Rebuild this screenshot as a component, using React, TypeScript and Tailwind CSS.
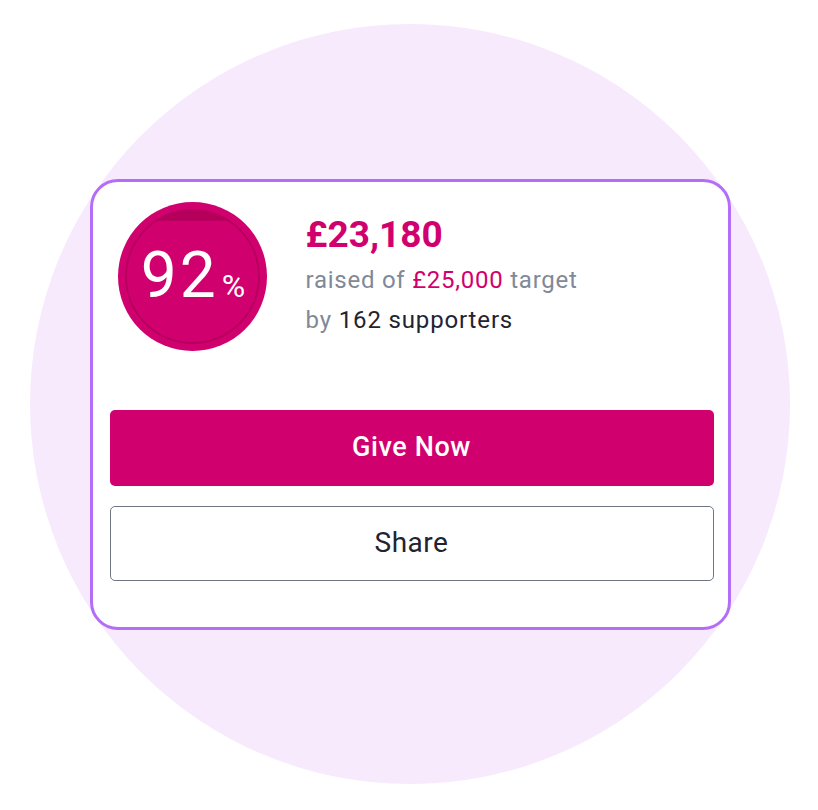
export default function App() {
  const raised = 23180;
  const target = 25000;
  const pct = Math.floor((raised / target) * 100);

  return (
    <div className="h-[810px] w-[818px] bg-white pl-[30px] pt-[24px] font-['Roboto',sans-serif]">
      <div className="flex h-[760px] w-[760px] items-center justify-center rounded-full bg-[#f7eafd]">
        <div className="flex h-[451px] w-[641px] flex-col rounded-[28px] border-[3px] border-[#b46df6] bg-white pl-[17px] pr-[14px]">
          <div className="flex items-start pl-[8px] pt-[20px]">
            <ProgressBadge pct={pct} />
            <div className="ml-[39px] pt-[11px]">
              <p className="text-[37px] font-bold leading-[44px] text-[#d1006f]">£23,180</p>
              <p className="mt-[4px] text-[24px] leading-[38px] tracking-[0.75px] text-[#7f8998]">
                raised of <span className="text-[#d1006f]">£25,000</span> target
              </p>
              <p className="mt-[2px] text-[24px] leading-[38px] tracking-[0.85px] text-[#7f8998]">
                by <span className="text-[#1f2430]">162 supporters</span>
              </p>
            </div>
          </div>
          <button className="mt-[59px] flex h-[76px] w-full items-center justify-center rounded-[5px] bg-[#d1006f] text-[27px] font-medium tracking-[0.6px] text-white">
            Give Now
          </button>
          <button className="mt-[20px] flex h-[75px] w-full items-center justify-center rounded-[5px] border-[1.5px] border-[#6f7682] bg-white text-[28px] tracking-[0.5px] text-[#1f2430]">
            Share
          </button>
        </div>
      </div>
    </div>
  );
}

function ProgressBadge({ pct }: { pct: number }) {
  // unfilled cap at the top of the inner disc, filled from the bottom
  const r = 66;
  const cx = 74;
  const cy = 74;
  const top = cy - r;
  const capY = top + (2 * r * (100 - pct)) / 100;
  const dx = Math.sqrt(r * r - (cy - capY) * (cy - capY));

  return (
    <div className="relative h-[149px] w-[149px] shrink-0">
      <svg width="149" height="149" viewBox="0 0 148 148" className="absolute inset-0">
        <circle cx={cx} cy={cy} r="74" fill="#d1006f" />
        <path
          d={`M ${cx - dx} ${capY} A ${r} ${r} 0 0 1 ${cx + dx} ${capY} Z`}
          fill="#b5005b"
        />
        <circle cx={cx} cy={cy} r={r} fill="none" stroke="#b8005f" strokeWidth="2" />
      </svg>
      <div className="absolute inset-0 flex items-baseline justify-center pt-[38px] pl-[2px] text-white">
        <span className="text-[64px] leading-[72px] tracking-[3px]">{pct}</span>
        <span className="ml-[3px] text-[32px] leading-[72px]">%</span>
      </div>
    </div>
  );
}
